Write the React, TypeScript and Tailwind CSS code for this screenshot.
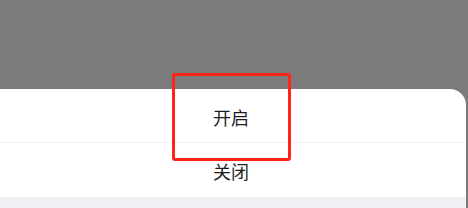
export default function App() {
  return (
    <div className="relative h-[208px] w-[468px] overflow-hidden bg-[#7b7b7c] font-['Noto_Sans_CJK_SC',sans-serif]">
      {/* Action sheet */}
      <div className="mt-[89px] mr-[2px] flex flex-col rounded-tr-[16px] bg-white">
        <div className="flex h-[54px] items-center justify-center border-b border-[#f0f0f0] pt-[4px] pr-[4px] text-[18px] text-[#1f1f1f]">
          开启
        </div>
        <div className="flex h-[54px] items-center justify-center pt-[2px] pr-[4px] text-[18px] text-[#1f1f1f]">
          关闭
        </div>
        <div className="h-[11px] bg-[#eef0f3]" />
      </div>

      {/* Highlight box */}
      <div className="absolute left-[172px] top-[73px] h-[88px] w-[119px] rounded-[3px] border-[3px] border-[#ff2418]" />
    </div>
  );
}
